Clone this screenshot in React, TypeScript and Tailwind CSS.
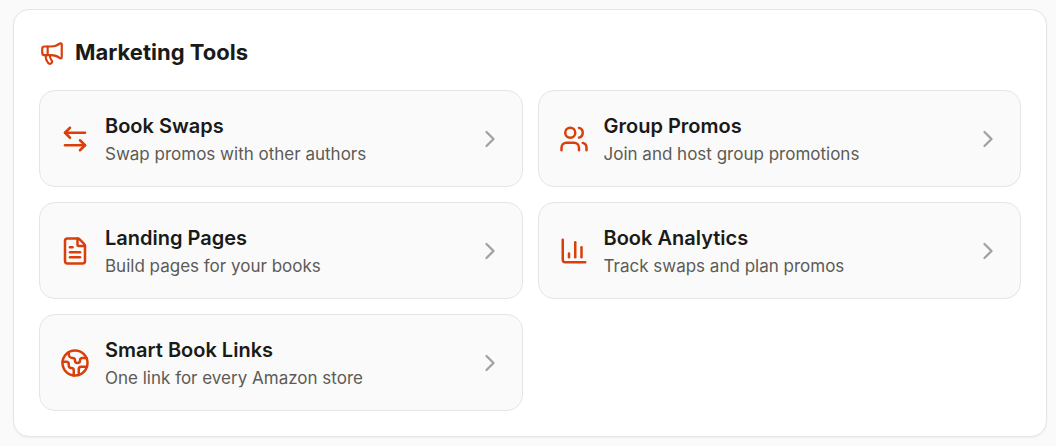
import {
  ArrowLeftRight,
  ChartColumn,
  ChevronRight,
  Earth,
  FileText,
  Megaphone,
  Users,
  type LucideIcon,
} from "lucide-react";

type Tool = {
  title: string;
  description: string;
  href: string;
  icon: LucideIcon;
};

const tools: Tool[] = [
  {
    title: "Book Swaps",
    description: "Swap promos with other authors",
    href: "#swaps",
    icon: ArrowLeftRight,
  },
  {
    title: "Group Promos",
    description: "Join and host group promotions",
    href: "#promos",
    icon: Users,
  },
  {
    title: "Landing Pages",
    description: "Build pages for your books",
    href: "#pages",
    icon: FileText,
  },
  {
    title: "Book Analytics",
    description: "Track swaps and plan promos",
    href: "#analytics",
    icon: ChartColumn,
  },
  {
    title: "Smart Book Links",
    description: "One link for every Amazon store",
    href: "#links",
    icon: Earth,
  },
];

const ToolCard = ({ title, description, href, icon: Icon }: Tool) => {
  return (
    <a
      href={href}
      className="flex items-center gap-[15px] rounded-2xl border border-[#e5e5e5] bg-[#fafafa] py-[18px] pr-[18px] pl-5 transition-colors hover:border-[#d93f0b]"
    >
      <Icon className="size-[30px] shrink-0 text-[#d93f0b]" />
      <div className="min-w-0 flex-1 pt-[3px]">
        <h3 className="text-[20px] leading-7 font-semibold text-[#1a1a18]">
          {title}
        </h3>
        <p className="text-[17px] leading-7 text-[#5c5b56]">{description}</p>
      </div>
      <ChevronRight className="size-7 shrink-0 text-[#a3a29e]" />
    </a>
  );
};

const App = () => {
  return (
    <main className="min-h-screen bg-[#fafafa] pt-[9px] pr-[9px] pb-[9px] pl-[13px] font-['Inter',sans-serif]">
      <section className="rounded-2xl border border-[#e5e5e5] bg-white p-[25px] shadow-xs">
        <h2 className="mb-5 flex items-center gap-2.5 text-[22px] leading-[35px] font-bold text-[#1a1a18]">
          <Megaphone className="size-[26px] text-[#d93f0b]" />
          Marketing Tools
        </h2>
        <div className="grid grid-cols-2 gap-[15px]">
          {tools.map((tool) => (
            <ToolCard key={tool.title} {...tool} />
          ))}
        </div>
      </section>
    </main>
  );
};

export default App;
